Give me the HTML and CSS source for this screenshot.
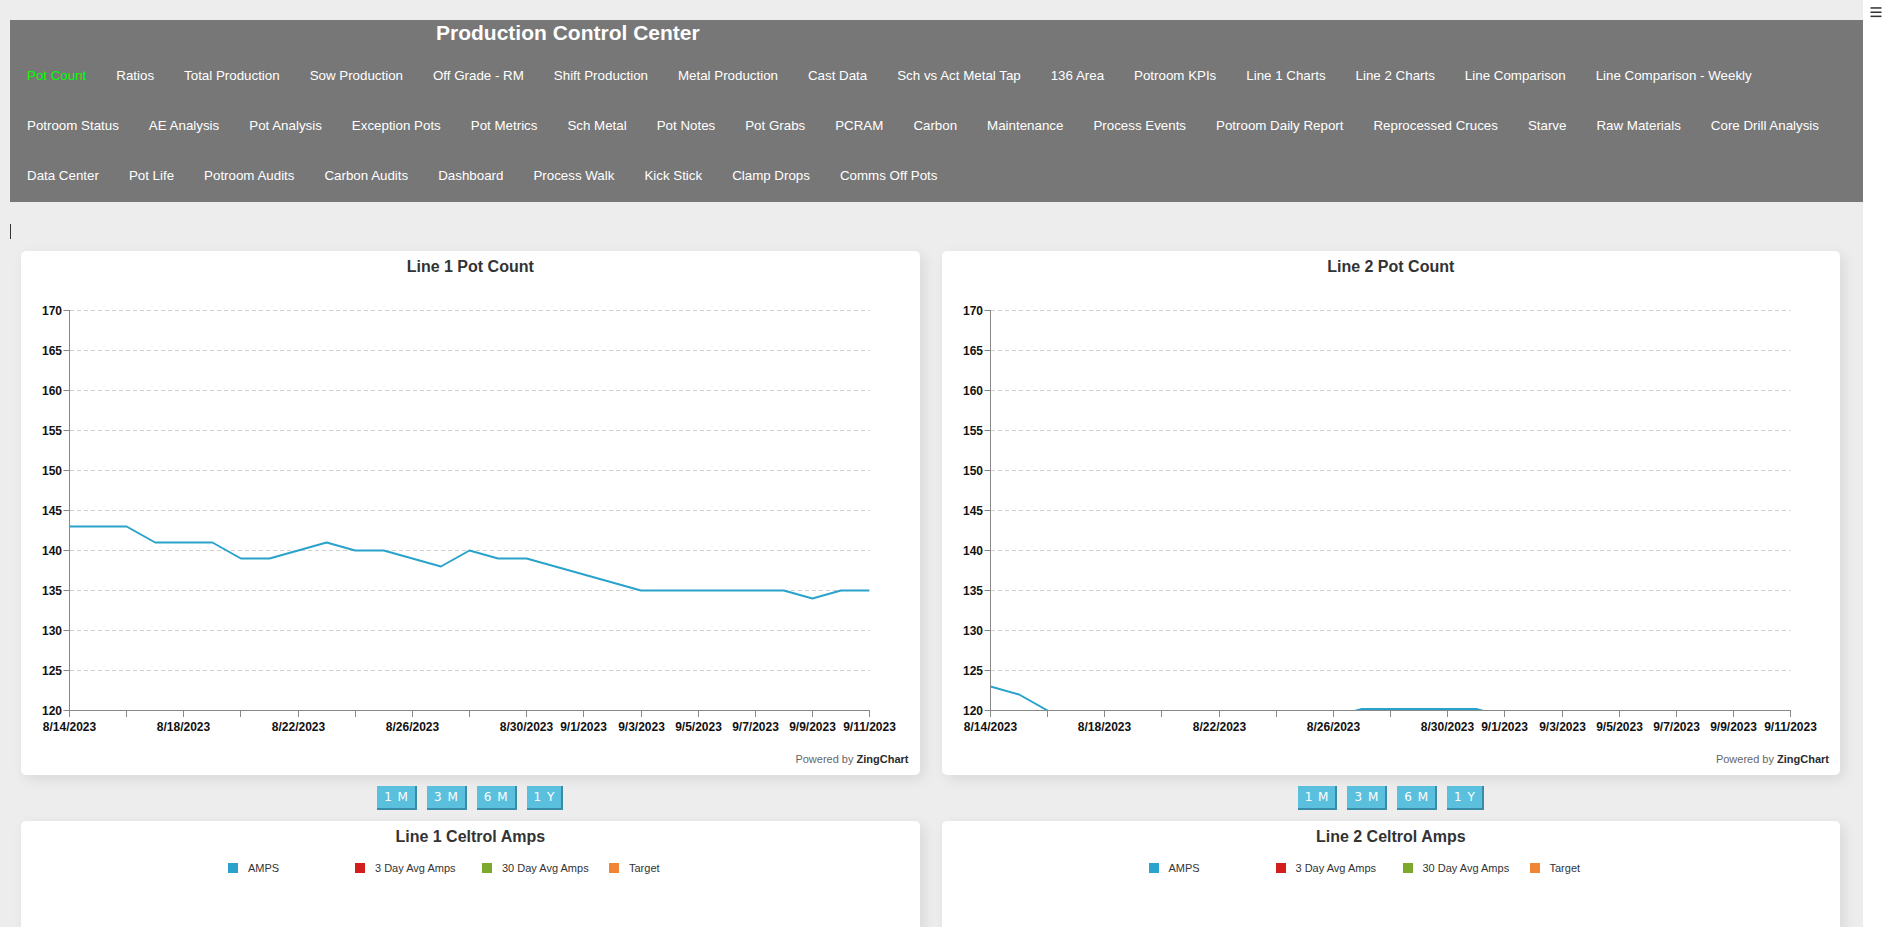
FILE: index.html
```html
<!DOCTYPE html>
<html lang="en">
<head>
<meta charset="utf-8">
<title>Production Control Center</title>
<link rel="stylesheet" href="styles.css">
</head>
<body>
<div class="page">
  <div class="main">
    <header class="topbar">
      <div class="brand">Production Control Center</div>
      <nav class="nav">
        <ul class="nav-row">
          <li><a class="active" href="#">Pot Count</a></li>
          <li><a href="#">Ratios</a></li>
          <li><a href="#">Total Production</a></li>
          <li><a href="#">Sow Production</a></li>
          <li><a href="#">Off Grade - RM</a></li>
          <li><a href="#">Shift Production</a></li>
          <li><a href="#">Metal Production</a></li>
          <li><a href="#">Cast Data</a></li>
          <li><a href="#">Sch vs Act Metal Tap</a></li>
          <li><a href="#">136 Area</a></li>
          <li><a href="#">Potroom KPIs</a></li>
          <li><a href="#">Line 1 Charts</a></li>
          <li><a href="#">Line 2 Charts</a></li>
          <li><a href="#">Line Comparison</a></li>
          <li><a href="#">Line Comparison - Weekly</a></li>
        </ul>
        <ul class="nav-row">
          <li><a href="#">Potroom Status</a></li>
          <li><a href="#">AE Analysis</a></li>
          <li><a href="#">Pot Analysis</a></li>
          <li><a href="#">Exception Pots</a></li>
          <li><a href="#">Pot Metrics</a></li>
          <li><a href="#">Sch Metal</a></li>
          <li><a href="#">Pot Notes</a></li>
          <li><a href="#">Pot Grabs</a></li>
          <li><a href="#">PCRAM</a></li>
          <li><a href="#">Carbon</a></li>
          <li><a href="#">Maintenance</a></li>
          <li><a href="#">Process Events</a></li>
          <li><a href="#">Potroom Daily Report</a></li>
          <li><a href="#">Reprocessed Cruces</a></li>
          <li><a href="#">Starve</a></li>
          <li><a href="#">Raw Materials</a></li>
          <li><a href="#">Core Drill Analysis</a></li>
        </ul>
        <ul class="nav-row">
          <li><a href="#">Data Center</a></li>
          <li><a href="#">Pot Life</a></li>
          <li><a href="#">Potroom Audits</a></li>
          <li><a href="#">Carbon Audits</a></li>
          <li><a href="#">Dashboard</a></li>
          <li><a href="#">Process Walk</a></li>
          <li><a href="#">Kick Stick</a></li>
          <li><a href="#">Clamp Drops</a></li>
          <li><a href="#">Comms Off Pots</a></li>
        </ul>
      </nav>
    </header>

    <div class="caret-row"><span class="caret"></span></div>

    <div class="charts">
      <section class="col">
        <div class="card chart-card">
          <h2 class="card-title">Line 1 Pot Count</h2>
          <svg class="plot" width="898" height="464">
            <defs><clipPath id="clip1"><rect x="48.5" y="33" width="800" height="400"/></clipPath></defs>
            <g class="grid">
              <line x1="49" y1="33.5" x2="848.5" y2="33.5"/>
              <line x1="49" y1="73.5" x2="848.5" y2="73.5"/>
              <line x1="49" y1="113.5" x2="848.5" y2="113.5"/>
              <line x1="49" y1="153.5" x2="848.5" y2="153.5"/>
              <line x1="49" y1="193.5" x2="848.5" y2="193.5"/>
              <line x1="49" y1="233.5" x2="848.5" y2="233.5"/>
              <line x1="49" y1="273.5" x2="848.5" y2="273.5"/>
              <line x1="49" y1="313.5" x2="848.5" y2="313.5"/>
              <line x1="49" y1="353.5" x2="848.5" y2="353.5"/>
              <line x1="49" y1="393.5" x2="848.5" y2="393.5"/>
            </g>
            <polyline class="series" clip-path="url(#clip1)" points="48.5,249.5 77.1,249.5 105.6,249.5 134.2,265.5 162.8,265.5 191.4,265.5 219.9,281.5 248.5,281.5 277.1,273.5 305.6,265.5 334.2,273.5 362.8,273.5 391.4,281.5 419.9,289.5 448.5,273.5 477.1,281.5 505.6,281.5 534.2,289.5 562.8,297.5 591.4,305.5 619.9,313.5 648.5,313.5 677.1,313.5 705.6,313.5 734.2,313.5 762.8,313.5 791.4,321.5 819.9,313.5 848.5,313.5"/>
            <g class="axis">
              <line x1="48.5" y1="33" x2="48.5" y2="434"/>
              <line x1="48" y1="433.5" x2="849" y2="433.5"/>
              <line x1="42.5" y1="33.5" x2="48.5" y2="33.5"/>
              <line x1="42.5" y1="73.5" x2="48.5" y2="73.5"/>
              <line x1="42.5" y1="113.5" x2="48.5" y2="113.5"/>
              <line x1="42.5" y1="153.5" x2="48.5" y2="153.5"/>
              <line x1="42.5" y1="193.5" x2="48.5" y2="193.5"/>
              <line x1="42.5" y1="233.5" x2="48.5" y2="233.5"/>
              <line x1="42.5" y1="273.5" x2="48.5" y2="273.5"/>
              <line x1="42.5" y1="313.5" x2="48.5" y2="313.5"/>
              <line x1="42.5" y1="353.5" x2="48.5" y2="353.5"/>
              <line x1="42.5" y1="393.5" x2="48.5" y2="393.5"/>
              <line x1="42.5" y1="433.5" x2="48.5" y2="433.5"/>
              <line x1="48.5" y1="433" x2="48.5" y2="440"/>
              <line x1="105.5" y1="433" x2="105.5" y2="440"/>
              <line x1="162.5" y1="433" x2="162.5" y2="440"/>
              <line x1="219.5" y1="433" x2="219.5" y2="440"/>
              <line x1="277.5" y1="433" x2="277.5" y2="440"/>
              <line x1="334.5" y1="433" x2="334.5" y2="440"/>
              <line x1="391.5" y1="433" x2="391.5" y2="440"/>
              <line x1="448.5" y1="433" x2="448.5" y2="440"/>
              <line x1="505.5" y1="433" x2="505.5" y2="440"/>
              <line x1="562.5" y1="433" x2="562.5" y2="440"/>
              <line x1="620.5" y1="433" x2="620.5" y2="440"/>
              <line x1="677.5" y1="433" x2="677.5" y2="440"/>
              <line x1="734.5" y1="433" x2="734.5" y2="440"/>
              <line x1="791.5" y1="433" x2="791.5" y2="440"/>
              <line x1="848.5" y1="433" x2="848.5" y2="440"/>
            </g>
            <g class="ylabels">
              <text x="41" y="37.8">170</text>
              <text x="41" y="77.8">165</text>
              <text x="41" y="117.8">160</text>
              <text x="41" y="157.8">155</text>
              <text x="41" y="197.8">150</text>
              <text x="41" y="237.8">145</text>
              <text x="41" y="277.8">140</text>
              <text x="41" y="317.8">135</text>
              <text x="41" y="357.8">130</text>
              <text x="41" y="397.8">125</text>
              <text x="41" y="437.8">120</text>
            </g>
            <g class="xlabels">
              <text x="48.5" y="454">8/14/2023</text>
              <text x="162.5" y="454">8/18/2023</text>
              <text x="277.5" y="454">8/22/2023</text>
              <text x="391.5" y="454">8/26/2023</text>
              <text x="505.5" y="454">8/30/2023</text>
              <text x="562.5" y="454">9/1/2023</text>
              <text x="620.5" y="454">9/3/2023</text>
              <text x="677.5" y="454">9/5/2023</text>
              <text x="734.5" y="454">9/7/2023</text>
              <text x="791.5" y="454">9/9/2023</text>
              <text x="848.5" y="454">9/11/2023</text>
            </g>
          </svg>
          <div class="powered">Powered by <b>ZingChart</b></div>
        </div>
        <div class="ranges">
          <button class="range-btn">1 M</button>
          <button class="range-btn">3 M</button>
          <button class="range-btn">6 M</button>
          <button class="range-btn">1 Y</button>
        </div>
        <div class="card amps-card">
          <h2 class="card-title">Line 1 Celtrol Amps</h2>
          <div class="legend">
            <span class="legend-item"><i class="swatch sw-blue"></i>AMPS</span>
            <span class="legend-item"><i class="swatch sw-red"></i>3 Day Avg Amps</span>
            <span class="legend-item"><i class="swatch sw-green"></i>30 Day Avg Amps</span>
            <span class="legend-item"><i class="swatch sw-orange"></i>Target</span>
          </div>
        </div>
      </section>

      <section class="col">
        <div class="card chart-card">
          <h2 class="card-title">Line 2 Pot Count</h2>
          <svg class="plot" width="898" height="464">
            <defs><clipPath id="clip2"><rect x="48.5" y="33" width="800" height="400"/></clipPath></defs>
            <g class="grid">
              <line x1="49" y1="33.5" x2="848.5" y2="33.5"/>
              <line x1="49" y1="73.5" x2="848.5" y2="73.5"/>
              <line x1="49" y1="113.5" x2="848.5" y2="113.5"/>
              <line x1="49" y1="153.5" x2="848.5" y2="153.5"/>
              <line x1="49" y1="193.5" x2="848.5" y2="193.5"/>
              <line x1="49" y1="233.5" x2="848.5" y2="233.5"/>
              <line x1="49" y1="273.5" x2="848.5" y2="273.5"/>
              <line x1="49" y1="313.5" x2="848.5" y2="313.5"/>
              <line x1="49" y1="353.5" x2="848.5" y2="353.5"/>
              <line x1="49" y1="393.5" x2="848.5" y2="393.5"/>
            </g>
            <polyline class="series" clip-path="url(#clip2)" points="48.5,409.5 77.1,417.5 105.6,433.5 134.2,473.5 162.8,473.5 191.4,473.5 219.9,473.5 248.5,473.5 277.1,473.5 305.6,473.5 334.2,473.5 362.8,473.5 391.4,439.9 419.9,431.9 448.5,431.9 477.1,431.9 505.6,431.9 534.2,431.9 562.8,439.9 591.4,465.5 619.9,465.5 648.5,465.5 677.1,465.5 705.6,465.5 734.2,465.5 762.8,465.5 791.4,465.5 819.9,465.5 848.5,465.5"/>
            <g class="axis">
              <line x1="48.5" y1="33" x2="48.5" y2="434"/>
              <line x1="48" y1="433.5" x2="849" y2="433.5"/>
              <line x1="42.5" y1="33.5" x2="48.5" y2="33.5"/>
              <line x1="42.5" y1="73.5" x2="48.5" y2="73.5"/>
              <line x1="42.5" y1="113.5" x2="48.5" y2="113.5"/>
              <line x1="42.5" y1="153.5" x2="48.5" y2="153.5"/>
              <line x1="42.5" y1="193.5" x2="48.5" y2="193.5"/>
              <line x1="42.5" y1="233.5" x2="48.5" y2="233.5"/>
              <line x1="42.5" y1="273.5" x2="48.5" y2="273.5"/>
              <line x1="42.5" y1="313.5" x2="48.5" y2="313.5"/>
              <line x1="42.5" y1="353.5" x2="48.5" y2="353.5"/>
              <line x1="42.5" y1="393.5" x2="48.5" y2="393.5"/>
              <line x1="42.5" y1="433.5" x2="48.5" y2="433.5"/>
              <line x1="48.5" y1="433" x2="48.5" y2="440"/>
              <line x1="105.5" y1="433" x2="105.5" y2="440"/>
              <line x1="162.5" y1="433" x2="162.5" y2="440"/>
              <line x1="219.5" y1="433" x2="219.5" y2="440"/>
              <line x1="277.5" y1="433" x2="277.5" y2="440"/>
              <line x1="334.5" y1="433" x2="334.5" y2="440"/>
              <line x1="391.5" y1="433" x2="391.5" y2="440"/>
              <line x1="448.5" y1="433" x2="448.5" y2="440"/>
              <line x1="505.5" y1="433" x2="505.5" y2="440"/>
              <line x1="562.5" y1="433" x2="562.5" y2="440"/>
              <line x1="620.5" y1="433" x2="620.5" y2="440"/>
              <line x1="677.5" y1="433" x2="677.5" y2="440"/>
              <line x1="734.5" y1="433" x2="734.5" y2="440"/>
              <line x1="791.5" y1="433" x2="791.5" y2="440"/>
              <line x1="848.5" y1="433" x2="848.5" y2="440"/>
            </g>
            <g class="ylabels">
              <text x="41" y="37.8">170</text>
              <text x="41" y="77.8">165</text>
              <text x="41" y="117.8">160</text>
              <text x="41" y="157.8">155</text>
              <text x="41" y="197.8">150</text>
              <text x="41" y="237.8">145</text>
              <text x="41" y="277.8">140</text>
              <text x="41" y="317.8">135</text>
              <text x="41" y="357.8">130</text>
              <text x="41" y="397.8">125</text>
              <text x="41" y="437.8">120</text>
            </g>
            <g class="xlabels">
              <text x="48.5" y="454">8/14/2023</text>
              <text x="162.5" y="454">8/18/2023</text>
              <text x="277.5" y="454">8/22/2023</text>
              <text x="391.5" y="454">8/26/2023</text>
              <text x="505.5" y="454">8/30/2023</text>
              <text x="562.5" y="454">9/1/2023</text>
              <text x="620.5" y="454">9/3/2023</text>
              <text x="677.5" y="454">9/5/2023</text>
              <text x="734.5" y="454">9/7/2023</text>
              <text x="791.5" y="454">9/9/2023</text>
              <text x="848.5" y="454">9/11/2023</text>
            </g>
          </svg>
          <div class="powered">Powered by <b>ZingChart</b></div>
        </div>
        <div class="ranges">
          <button class="range-btn">1 M</button>
          <button class="range-btn">3 M</button>
          <button class="range-btn">6 M</button>
          <button class="range-btn">1 Y</button>
        </div>
        <div class="card amps-card">
          <h2 class="card-title">Line 2 Celtrol Amps</h2>
          <div class="legend">
            <span class="legend-item"><i class="swatch sw-blue"></i>AMPS</span>
            <span class="legend-item"><i class="swatch sw-red"></i>3 Day Avg Amps</span>
            <span class="legend-item"><i class="swatch sw-green"></i>30 Day Avg Amps</span>
            <span class="legend-item"><i class="swatch sw-orange"></i>Target</span>
          </div>
        </div>
      </section>
    </div>
  </div>

  <aside class="strip">
    <svg class="burger" width="12" height="12" viewBox="0 0 12 12">
      <rect x="0.5" y="1.2" width="11" height="1.5"/>
      <rect x="0.5" y="5.5" width="11" height="1.5"/>
      <rect x="0.5" y="9.6" width="11" height="1.5"/>
    </svg>
  </aside>
</div>
</body>
</html>
```
FILE: styles.css
```css
html, body {
  margin: 0;
  height: 100%;
  overflow: hidden;
}

body {
  font-family: "Liberation Sans", Arial, sans-serif;
  background: #ededed;
  color: #333;
}

.page {
  display: flex;
  height: 100vh;
  overflow: hidden;
}

.main {
  flex: 1;
  min-width: 0;
  padding: 20px 0 0 10px;
  background: #ededed;
  overflow: hidden;
}

.strip {
  flex: 0 0 26px;
  background: #fff;
  padding: 6px 0 0 7px;
  box-sizing: border-box;
}

.burger {
  display: block;
  fill: #333;
}

/* top bar */
.topbar {
  background: #777;
  padding-bottom: 1px;
}

.brand {
  color: #fff;
  font-weight: bold;
  font-size: 21px;
  line-height: 25px;
  padding-left: 426px;
  margin-bottom: 6px;
}

.nav-row {
  display: flex;
  list-style: none;
  margin: 0;
  padding: 0 0 0 2px;
}

.nav-row a {
  display: block;
  padding: 0 15px;
  line-height: 50px;
  font-size: 13.333px;
  color: #fff;
  text-decoration: none;
  white-space: nowrap;
}

.nav-row a.active {
  color: #00ff00;
}

/* caret */
.caret-row {
  height: 15px;
  margin: 22px 0 12px;
}

.caret {
  display: block;
  width: 0;
  height: 15px;
  border-left: 1px solid #333;
}

/* charts */
.charts {
  display: grid;
  grid-template-columns: 1fr 1fr;
  column-gap: 22px;
  padding: 0 23px 0 11px;
}

.col {
  min-width: 0;
}

.card {
  background: #fff;
  border-radius: 5px;
  box-shadow: 4px 4px 14px rgba(0, 0, 0, 0.09);
}

.chart-card {
  padding: 6px 0 9px;
}

.card-title {
  margin: 0;
  text-align: center;
  font-size: 16px;
  line-height: 20px;
  font-weight: bold;
  color: #333;
}

.plot {
  display: block;
  overflow: visible;
}

.grid line {
  stroke: #cfcfcf;
  stroke-width: 1;
  stroke-dasharray: 4 3;
}

.axis line {
  stroke: #888;
  stroke-width: 1;
}

.series {
  fill: none;
  stroke: #29a2cc;
  stroke-width: 2;
  stroke-linejoin: round;
}

.ylabels text,
.xlabels text {
  font-family: "Liberation Sans", Arial, sans-serif;
  font-size: 12px;
  font-weight: bold;
  fill: #111;
}

.ylabels text {
  text-anchor: end;
}

.xlabels text {
  text-anchor: middle;
}

.powered {
  margin-top: 12px;
  padding-right: 11px;
  text-align: right;
  font-size: 11px;
  line-height: 13px;
  color: #666;
}

.powered b {
  color: #2b2b2b;
}

/* range buttons */
.ranges {
  display: flex;
  justify-content: center;
  gap: 10px;
  margin: 11px 0;
}

.range-btn {
  font-family: "DejaVu Sans", Verdana, sans-serif;
  font-size: 12px;
  letter-spacing: 1px;
  color: #fff;
  background: #5bc0de;
  border: 0;
  border-right: 2px solid #3a8ca6;
  border-bottom: 2px solid #3a8ca6;
  padding: 0 6px 0 7px;
  height: 24px;
  line-height: 22px;
  cursor: pointer;
}

/* amps cards */
.amps-card {
  padding-top: 6px;
  height: 300px;
}

.legend {
  display: flex;
  padding-left: 207px;
  margin-top: 14px;
  font-size: 11px;
  line-height: 14px;
  color: #333;
}

.legend-item {
  flex: 0 0 127px;
  display: flex;
  align-items: center;
  gap: 10px;
  white-space: nowrap;
}

.swatch {
  display: block;
  width: 10px;
  height: 10px;
}

.sw-blue { background: #29a2cc; }
.sw-red { background: #d31e1e; }
.sw-green { background: #7ca82b; }
.sw-orange { background: #ef8535; }
```
